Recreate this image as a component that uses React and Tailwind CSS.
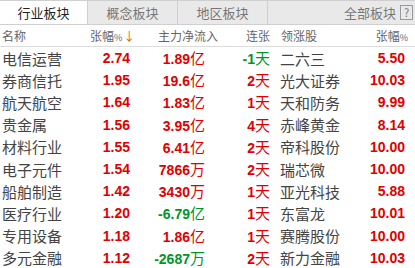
const ROWS = [
  { name: '电信运营', pct: '2.74', flow: '1.89', unit: '亿', up: true, days: '-1', dUp: false, lead: '二六三', lp: '5.50' },
  { name: '券商信托', pct: '1.95', flow: '19.6', unit: '亿', up: true, days: '2', dUp: true, lead: '光大证券', lp: '10.03' },
  { name: '航天航空', pct: '1.64', flow: '1.83', unit: '亿', up: true, days: '1', dUp: true, lead: '天和防务', lp: '9.99' },
  { name: '贵金属', pct: '1.56', flow: '3.95', unit: '亿', up: true, days: '4', dUp: true, lead: '赤峰黄金', lp: '8.14' },
  { name: '材料行业', pct: '1.55', flow: '6.41', unit: '亿', up: true, days: '2', dUp: true, lead: '帝科股份', lp: '10.00' },
  { name: '电子元件', pct: '1.54', flow: '7866', unit: '万', up: true, days: '2', dUp: true, lead: '瑞芯微', lp: '10.00' },
  { name: '船舶制造', pct: '1.42', flow: '3430', unit: '万', up: true, days: '1', dUp: true, lead: '亚光科技', lp: '5.88' },
  { name: '医疗行业', pct: '1.20', flow: '-6.79', unit: '亿', up: false, days: '1', dUp: true, lead: '东富龙', lp: '10.01' },
  { name: '专用设备', pct: '1.18', flow: '1.86', unit: '亿', up: true, days: '1', dUp: true, lead: '赛腾股份', lp: '10.00' },
  { name: '多元金融', pct: '1.12', flow: '-2687', unit: '万', up: false, days: '2', dUp: true, lead: '新力金融', lp: '10.03' },
]

const cjk = "font-['Noto_Sans_CJK_SC',sans-serif]"
const num = "font-['Liberation_Sans',Arial,sans-serif] font-bold"

export default function App() {
  return (
    <div className={`w-[415px] h-[268px] overflow-hidden bg-white ${cjk}`}>
      {/* tabs */}
      <div className="flex h-[25px] border-t border-b border-[#cfcfcf] bg-[#e9e9e9] text-[13px] leading-none whitespace-nowrap">
        <div className="w-[88px] shrink-0 flex items-center justify-center bg-white text-[#222] border-r border-[#cfcfcf]">行业板块</div>
        <div className="w-[90px] shrink-0 flex items-center justify-center text-[#777] border-r border-[#cfcfcf]">概念板块</div>
        <div className="w-[90px] shrink-0 flex items-center justify-center text-[#777] border-r border-[#cfcfcf]">地区板块</div>
        <div className="flex-1 flex items-center justify-end gap-[4px] pr-[2px] text-[#777]">
          全部板块
          <span className="w-[13px] h-[15px] border border-[#999] text-[11px] flex items-center justify-center text-[#777]">?</span>
        </div>
      </div>

      {/* header */}
      <div className="flex h-[22px] items-center border-b border-[#dcdcdc] text-[12px] text-[#666] leading-none whitespace-nowrap">
        <div className="w-[90px] shrink-0 pl-[2px]">名称</div>
        <div className="w-[40px] shrink-0">
          张幅<span className="text-[9px]">%</span><span className="text-[#f05a00] text-[12px] ml-[1px]">↓</span>
        </div>
        <div className="w-[116px] shrink-0 pl-[28px]">主力净流入</div>
        <div className="w-[35px] shrink-0">连张</div>
        <div className="flex-1">领涨股</div>
        <div className="pr-[7px]">张幅<span className="text-[9px]">%</span></div>
      </div>

      {/* rows */}
      <div>
        {ROWS.map((r) => (
          <div key={r.name} className="flex h-[22.2px] items-center leading-none whitespace-nowrap">
            <div className="w-[88px] shrink-0 pl-[2px] text-[15px] text-[#444]">{r.name}</div>
            <div className={`w-[42px] shrink-0 text-right text-[14px] text-[#e00000] ${num}`}>{r.pct}</div>
            <div className={`w-[75px] shrink-0 flex justify-end items-baseline ${r.up ? 'text-[#e00000]' : 'text-[#00962a]'}`}>
              <span className={`text-[14px] ${num}`}>{r.flow}</span>
              <span className="text-[15px]">{r.unit}</span>
            </div>
            <div className={`w-[65px] shrink-0 flex justify-end items-baseline ${r.dUp ? 'text-[#e00000]' : 'text-[#00962a]'}`}>
              <span className={`text-[14px] ${num}`}>{r.days}</span>
              <span className="text-[15px]">天</span>
            </div>
            <div className="flex-1 pl-[10px] text-[15px] text-[#444]">{r.lead}</div>
            <div className={`pr-[10px] text-[14px] text-[#e00000] ${num}`}>{r.lp}</div>
          </div>
        ))}
      </div>
    </div>
  )
}
